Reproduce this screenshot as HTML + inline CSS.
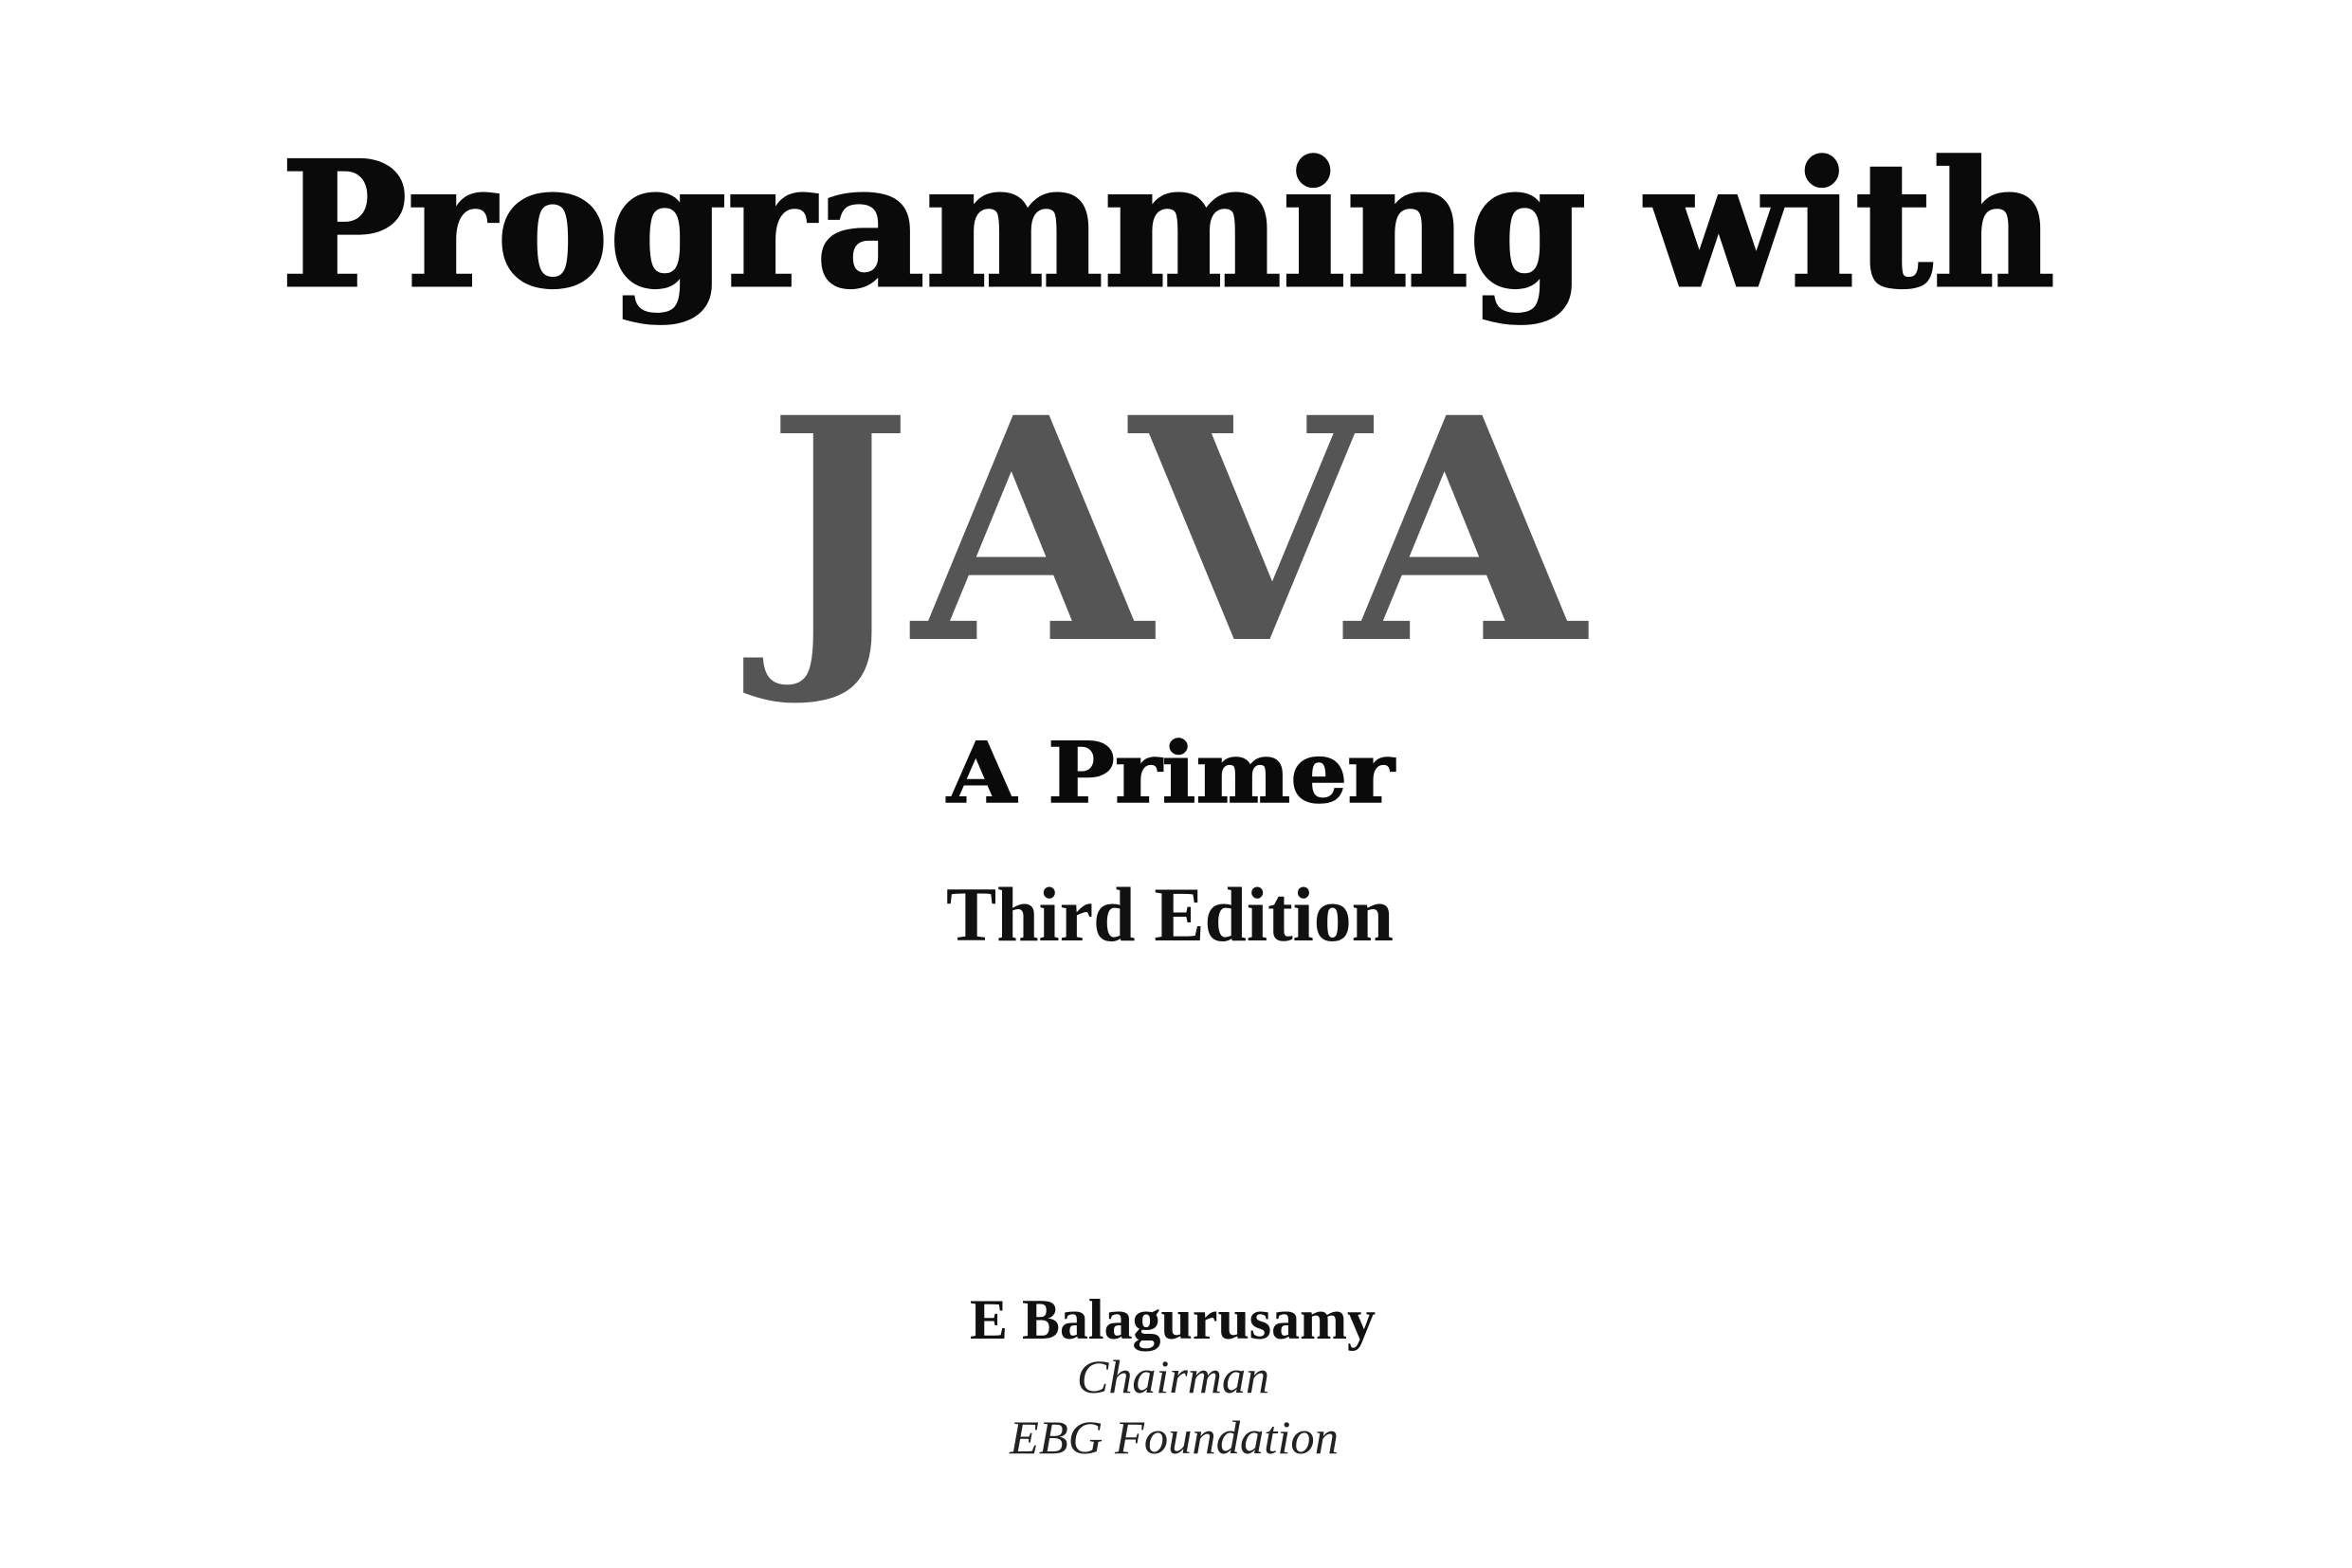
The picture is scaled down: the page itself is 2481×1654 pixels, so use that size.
<!DOCTYPE html>
<html><head><meta charset="utf-8"><style>
html,body{margin:0;padding:0;background:#fff;width:2481px;height:1654px;overflow:hidden}
svg{display:block}
</style></head><body>
<svg width="2481" height="1654" viewBox="0 0 2481 1654" xmlns="http://www.w3.org/2000/svg">
<rect width="2481" height="1654" fill="#fff"/>
<text x="296" y="301" font-family="DejaVu Serif, serif" font-weight="bold" font-size="182" textLength="1872" lengthAdjust="spacingAndGlyphs" fill="#0a0a0a" stroke="#0a0a0a" stroke-width="3">Programming with</text>
<text x="808" y="674" font-family="DejaVu Serif, serif" font-weight="bold" font-size="324" textLength="864" lengthAdjust="spacingAndGlyphs" fill="#555">JAVA</text>
<text x="999" y="846" font-family="DejaVu Serif, serif" font-weight="bold" font-size="88" textLength="472" lengthAdjust="spacingAndGlyphs" fill="#0a0a0a" stroke="#0a0a0a" stroke-width="1.5">A Primer</text>
<text x="998" y="992" font-family="Liberation Serif, serif" font-weight="bold" font-size="82" textLength="472" lengthAdjust="spacingAndGlyphs" fill="#111">Third Edition</text>
<text x="1023" y="1412" font-family="Liberation Serif, serif" font-weight="bold" font-size="60" textLength="428" lengthAdjust="spacingAndGlyphs" fill="#111">E Balagurusamy</text>
<text x="1136" y="1469" font-family="Liberation Serif, serif" font-style="italic" font-size="50" textLength="203" lengthAdjust="spacingAndGlyphs" fill="#222">Chairman</text>
<text x="1065" y="1533" font-family="Liberation Serif, serif" font-style="italic" font-size="50" textLength="347" lengthAdjust="spacingAndGlyphs" fill="#222">EBG Foundation</text>
</svg>
</body></html>
